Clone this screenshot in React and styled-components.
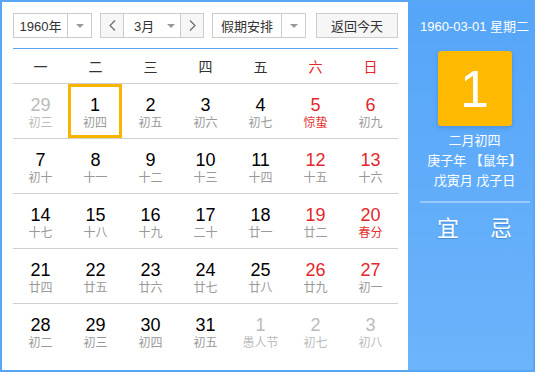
import { createGlobalStyle, styled } from "styled-components";

const Global = createGlobalStyle`
  html, body { margin: 0; padding: 0; background: #fff; }
  body { font-family: "Liberation Sans", "Noto Sans CJK SC", sans-serif; }
`;

const Frame = styled.div`
  width: 535px;
  height: 372px;
  box-sizing: border-box;
  border: 2px solid #58a7f7;
  display: flex;
`;

const Main = styled.div`
  width: 406px;
  box-sizing: border-box;
  padding: 11px 10px 0 11px;
`;

const Toolbar = styled.div`
  display: flex;
  height: 25px;
  font-size: 13px;
  color: #333;
`;

const Select = styled.div`
  display: flex;
  height: 25px;
  box-sizing: border-box;
  border: 1px solid #ccc;
  background: #fff;
  width: ${(p) => p.$w}px;
  margin-right: ${(p) => p.$mr || 0}px;
`;

const SelectText = styled.div`
  flex: 1;
  display: flex;
  align-items: center;
  justify-content: center;
`;

const Caret = styled.div`
  width: 23px;
  display: flex;
  align-items: center;
  justify-content: center;
  border-left: 1px solid #ccc;
  &::after {
    content: "";
    border-left: 4px solid transparent;
    border-right: 4px solid transparent;
    border-top: 4px solid #999;
  }
`;

const InlineCaret = styled.div`
  width: 18px;
  display: flex;
  align-items: center;
  justify-content: center;
  &::after {
    content: "";
    border-left: 4px solid transparent;
    border-right: 4px solid transparent;
    border-top: 4px solid #999;
  }
`;

const Step = styled.div`
  width: 22px;
  display: flex;
  align-items: center;
  justify-content: center;
  background: #f6f6f6;
  border-left: ${(p) => (p.$right ? "1px solid #ccc" : "none")};
  border-right: ${(p) => (p.$right ? "none" : "1px solid #ccc")};
`;

const MonthText = styled.div`
  flex: 1;
  display: flex;
  align-items: center;
  padding-left: 10px;
`;

const TodayButton = styled.div`
  width: 82px;
  height: 25px;
  box-sizing: border-box;
  border: 1px solid #ccc;
  background: #f6f6f6;
  display: flex;
  align-items: center;
  justify-content: center;
`;

const Rule = styled.div`
  height: 1px;
  margin-top: 10px;
  background: #5aa5f2;
`;

const Week = styled.div`
  display: grid;
  grid-template-columns: repeat(7, 55px);
  height: 34px;
  border-bottom: 1px solid #cfcfcf;
`;

const WeekDay = styled.div`
  display: flex;
  align-items: center;
  justify-content: center;
  font-size: 14px;
  color: ${(p) => (p.$red ? "#e3262b" : "#333")};
`;

const Row = styled.div`
  display: grid;
  grid-template-columns: repeat(7, 55px);
  height: 55px;
  box-sizing: border-box;
  border-bottom: ${(p) => (p.$last ? "none" : "1px solid #cfcfcf")};
`;

const Cell = styled.div`
  box-sizing: border-box;
  height: 54px;
  display: flex;
  flex-direction: column;
  align-items: center;
  padding-top: ${(p) => (p.$sel ? 8 : 11)}px;
  border: ${(p) => (p.$sel ? "3px solid #f8b500" : "none")};
  margin-right: ${(p) => (p.$sel ? 1 : 0)}px;
`;

const Num = styled.div`
  font-size: 18px;
  line-height: 20px;
  color: ${(p) => p.$c};
`;

const Lunar = styled.div`
  font-size: 12px;
  line-height: 16px;
  color: ${(p) => p.$c};
`;

const Side = styled.div`
  flex: 1;
  background: linear-gradient(#55a5f8, #6cb4fb);
  display: flex;
  flex-direction: column;
  align-items: center;
  padding: 16px 0 0 8px;
  color: #fff;
`;

const DateLine = styled.div`
  font-size: 13px;
  line-height: 18px;
`;

const BigDay = styled.div`
  margin-top: 15px;
  width: 74px;
  height: 75px;
  border-radius: 3px;
  background: #ffb900;
  box-shadow: 0 2px 4px rgba(40, 90, 160, 0.3);
  display: flex;
  align-items: center;
  justify-content: center;
  font-size: 52px;
  font-weight: 300;
`;

const Info = styled.div`
  margin-top: 5px;
  font-size: 13px;
  line-height: 20px;
  text-align: center;
`;

const SideRule = styled.div`
  margin-top: 10px;
  width: 110px;
  height: 2px;
  background: rgba(255, 255, 255, 0.35);
`;

const Advice = styled.div`
  margin-top: 12px;
  display: flex;
`;

const AdviceItem = styled.div`
  width: 53px;
  text-align: center;
  font-size: 22px;
  line-height: 28px;
  text-shadow: 0 1px 1px rgba(0, 60, 140, 0.3);
`;

const Chevron = ({ dir }) => (
  <svg width="7" height="11" viewBox="0 0 7 11">
    <polyline
      points={dir === "left" ? "6,0.5 1,5.5 6,10.5" : "1,0.5 6,5.5 1,10.5"}
      fill="none"
      stroke="#666"
      strokeWidth="1.1"
    />
  </svg>
);

const rows = [
  [["29", "初三", 1], ["1", "初四", 0, 1], ["2", "初五"], ["3", "初六"], ["4", "初七"], ["5", "惊蛰", 0, 0, 1], ["6", "初九"]],
  [["7", "初十"], ["8", "十一"], ["9", "十二"], ["10", "十三"], ["11", "十四"], ["12", "十五"], ["13", "十六"]],
  [["14", "十七"], ["15", "十八"], ["16", "十九"], ["17", "二十"], ["18", "廿一"], ["19", "廿二"], ["20", "春分", 0, 0, 1]],
  [["21", "廿四"], ["22", "廿五"], ["23", "廿六"], ["24", "廿七"], ["25", "廿八"], ["26", "廿九"], ["27", "初一"]],
  [["28", "初二"], ["29", "初三"], ["30", "初四"], ["31", "初五"], ["1", "愚人节", 1], ["2", "初七", 1], ["3", "初八", 1]],
];

const weekDays = ["一", "二", "三", "四", "五", "六", "日"];

export default function App() {
  return (
    <>
      <Global />
      <Frame>
        <Main>
          <Toolbar>
            <Select $w={79} $mr={8}>
              <SelectText>1960年</SelectText>
              <Caret />
            </Select>
            <Select $w={104} $mr={8}>
              <Step>
                <Chevron dir="left" />
              </Step>
              <MonthText>3月</MonthText>
              <InlineCaret />
              <Step $right>
                <Chevron dir="right" />
              </Step>
            </Select>
            <Select $w={94} $mr={10}>
              <SelectText>假期安排</SelectText>
              <Caret />
            </Select>
            <TodayButton>返回今天</TodayButton>
          </Toolbar>
          <Rule />
          <Week>
            {weekDays.map((d, i) => (
              <WeekDay key={d} $red={i > 4}>
                {d}
              </WeekDay>
            ))}
          </Week>
          {rows.map((row, r) => (
            <Row key={r} $last={r === rows.length - 1}>
              {row.map(([n, l, other, sel, term], i) => {
                const numColor = other ? "#bbb" : i > 4 ? "#e3262b" : "#000";
                const lunarColor = other ? "#bbb" : term ? "#e5302e" : "#999";
                return (
                  <Cell key={i} $sel={sel}>
                    <Num $c={numColor}>{n}</Num>
                    <Lunar $c={lunarColor}>{l}</Lunar>
                  </Cell>
                );
              })}
            </Row>
          ))}
        </Main>
        <Side>
          <DateLine>1960-03-01 星期二</DateLine>
          <BigDay>1</BigDay>
          <Info>
            二月初四
            <br />
            庚子年 【鼠年】
            <br />
            戊寅月 戊子日
          </Info>
          <SideRule />
          <Advice>
            <AdviceItem>宜</AdviceItem>
            <AdviceItem>忌</AdviceItem>
          </Advice>
        </Side>
      </Frame>
    </>
  );
}
